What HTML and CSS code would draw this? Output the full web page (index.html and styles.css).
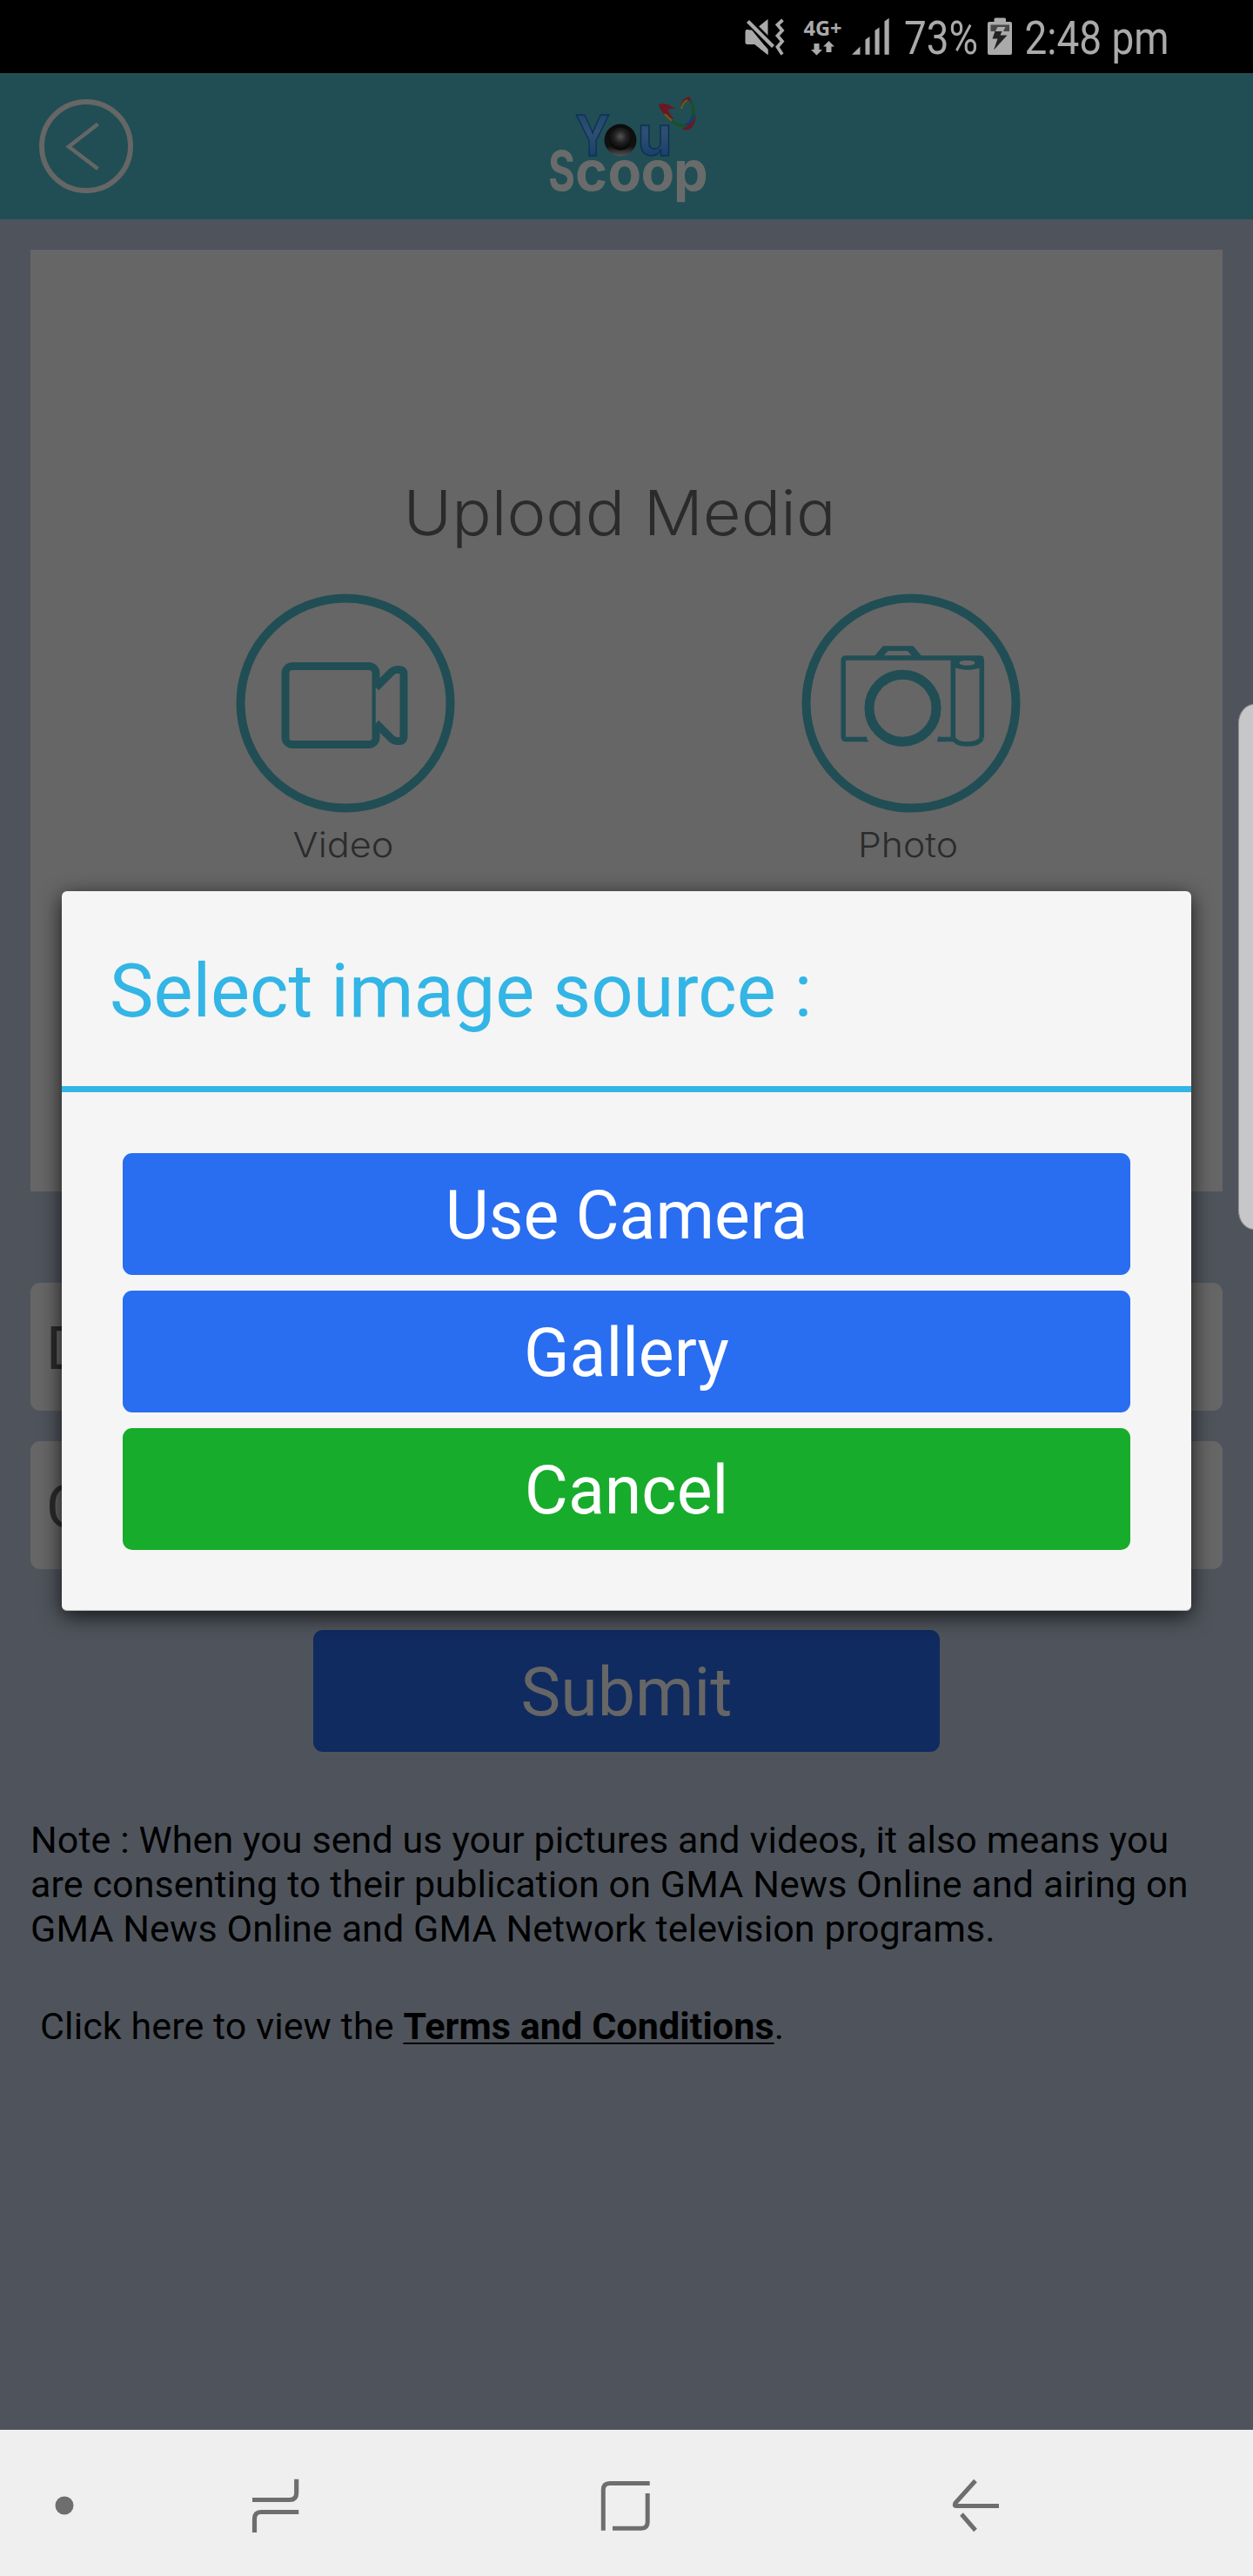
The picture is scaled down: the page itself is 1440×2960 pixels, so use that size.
FILE: index.html
```html
<!DOCTYPE html>
<html lang="en">
<head>
<meta charset="utf-8">
<title>YouScoop</title>
<link rel="stylesheet" href="styles.css">
</head>
<body>
<div class="status">
  <svg class="st-mute" width="52" height="84" viewBox="852 0 52 84">
    <path fill="#aaa" d="M867.5 34 882.5 22V63L867.5 51H859q-2.500 0-2.500-2.500V36.500q0-2.500 2.500-2.500z"/>
    <path stroke="#000" stroke-width="11" d="M855 21 894 60"/>
    <path fill="#aaa" d="M867.500 51 857 44V34.500H864L882.500 57V63z"/>
    <path stroke="#aaa" stroke-width="4.200" d="M859.500 24.500 888.500 53.500"/>
    <path fill="none" stroke="#aaa" stroke-width="3.800" d="M899.500 23 893.500 28.500 899 35 893.500 41 899 47.500 893.500 54 899 62.500"/>
  </svg>
  <svg class="st-net" width="50" height="84" viewBox="920 0 50 84">
    <text class="net" x="923.500" y="40.700" textLength="44" lengthAdjust="spacingAndGlyphs">4G+</text>
    <path fill="#aaa" d="M935.500 50h6v7h3.500l-6.500 6.500-6.500-6.500h3.500zM949.500 60h6v-6.500h3.500l-6.500-6.500-6.500 6.500h3.500z"/>
  </svg>
  <svg class="st-signal" width="50" height="84" viewBox="976 0 50 84">
    <path fill="#aaa" d="M979 62.700 988.500 53.500V62.700zM994.500 62.700V45.500L999.500 42V62.700zM1005.500 62.700V35L1010.600 31.500V62.700zM1016.500 62.700V24.500L1021.700 20.700V62.700z"/>
  </svg>
  <svg class="st-pct" width="94" height="84" viewBox="1034 0 94 84">
    <text class="clock" x="1039" y="62" textLength="85" lengthAdjust="spacingAndGlyphs">73%</text>
  </svg>
  <svg class="st-batt" width="34" height="84" viewBox="1132 0 34 84">
    <path fill="#aaa" d="M1142.500 25v-3q0-1.500 1.500-1.500h10.500q1.500 0 1.500 1.500v3h5q2 0 2 2V61q0 2-2 2h-24q-2 0-2-2V27q0-2 2-2z"/>
    <path fill="#484848" d="M1138.500 28.500h21.500v7.500h-21.500z"/>
    <path fill="#aaa" d="M1146.500 31h9l-3 6h-9z"/>
    <path fill="#222" d="M1143.500 36h8l-2 4.500h8L1142 57.500 1146.500 44.500h-6z"/>
  </svg>
  <svg class="st-time" width="178" height="84" viewBox="1172 0 178 84">
    <text class="clock" x="1177.500" y="62" textLength="166" lengthAdjust="spacingAndGlyphs">2:48 pm</text>
  </svg>
</div>
<header class="header">
  <svg class="back" width="108" height="108" viewBox="0 0 108 108" fill="none" stroke="#666">
    <circle cx="54" cy="54" r="51" stroke-width="6"/>
    <path d="M67.500 28.500 34 54.500 67.500 80" stroke-width="4.500"/>
  </svg>
  <svg class="logo" width="240" height="156" viewBox="0 0 240 156">
    <defs>
      <linearGradient id="blue" x1="0" y1="0" x2="0" y2="1"><stop offset="0" stop-color="#163f6b"/><stop offset=".45" stop-color="#2f4f72"/><stop offset="1" stop-color="#0d3866"/></linearGradient>
      <radialGradient id="lens" cx=".5" cy=".4" r=".55"><stop offset="0" stop-color="#555"/><stop offset=".5" stop-color="#222"/><stop offset="1" stop-color="#080808"/></radialGradient>
      <linearGradient id="ringg" x1="0" y1="0" x2="0" y2="1"><stop offset="0" stop-color="#0c0c0c"/><stop offset=".7" stop-color="#111"/><stop offset="1" stop-color="#555"/></linearGradient>
    </defs>
    <text class="scoop" y="129"><tspan x="30" textLength="31" lengthAdjust="spacingAndGlyphs">S</tspan><tspan x="61 98.500 136.500 174">coop</tspan></text>
    <text class="you" x="61" y="89" textLength="40" lengthAdjust="spacingAndGlyphs">Y</text>
    <text class="you" x="132.500" y="89" textLength="40" lengthAdjust="spacingAndGlyphs">u</text>
    <circle cx="113" cy="71" r="18.500" fill="url(#ringg)"/>
    <circle cx="113" cy="69.500" r="13" fill="url(#lens)"/>
    <path fill="#6b1822" d="M157 30q5-2 10 0l10 5q-6-1-9 1 1 5 6 10l-3 2Q159 40 157 30z"/>
    <path fill="none" stroke="#6b5a14" stroke-width="2.600" d="M164 41q8 9 16 12"/>
    <path fill="none" stroke="#17512a" stroke-width="3.600" d="M172 49q8 6 16 6"/>
    <path fill="#6b1822" d="M184 58Q197 52 200 42 199 55 192 59 187 60 184 58zM182 33q2-11 10-12 3 3 3 10-2-6-5-6-5 2-8 8z"/>
    <path fill="none" stroke="#6b5a14" stroke-width="2.200" d="M183 35q2-8 7-10"/>
    <path fill="#17512a" d="M193 23q6 7 6 18-4 5-5 4 2-10-1-22z"/>
    <path fill="#173a6b" d="M187 53q7-4 8-10l4-2q-1 8-9 14z"/>
  </svg>
</header>
<main class="page">
  <section class="upload">
    <svg class="upload-title" width="520" height="90" viewBox="453 547 520 90">
      <text class="gothic" x="463.500" y="615" font-size="72" textLength="497" lengthAdjust="spacingAndGlyphs">Upload Media</text>
    </svg>
    <div class="options">
      <svg width="260" height="330" viewBox="0 0 260 330">
        <g fill="none" stroke="#204e54">
          <circle cx="130" cy="130" r="120.500" stroke-width="10"/>
          <rect x="61" y="87.500" width="104" height="90" rx="8" stroke-width="9"/>
        </g>
        <path fill="#666" stroke="none" d="M164.700 112 185 95H195V170H185L164.700 153z"/>
        <path fill="none" stroke="#204e54" stroke-width="9" d="M165 112 183 94q3-2.500 6-2.500h3q5 0 5 5V168.500q0 5-5 5h-3q-3 0-6-2.500L165 153"/>
        <text class="gothic" x="69.500" y="307" font-size="39.500" textLength="116" lengthAdjust="spacingAndGlyphs">Video</text>
      </svg>
      <svg width="260" height="330" viewBox="0 0 260 330">
        <g fill="none" stroke="#204e54">
          <circle cx="130" cy="130" r="120.500" stroke-width="10"/>
          <circle cx="120.500" cy="135.700" r="38.500" stroke-width="11"/>
          <path stroke-width="5.500" d="M79 171.500H55q-2.800 0-2.800-3V81q0-2.900 3-2.900H208q3.300 0 3.300 3V170M162 171.500H178M178.300 78V170Q182 177 194.800 177 208 177 211.300 170"/>
        </g>
        <path fill="#204e54" fill-rule="evenodd" d="M88 76 97.600 64.300H132.600L142.300 76zM98.700 75.500H131L126 70H103.500zM178 76H213V88Q194.500 95.500 178 88zM185.400 83.700a9 3 0 0 0 18 0 9 3 0 0 0-18 0zM76 168.700H77.500L81.500 174.300H76zM161 168.700H165V174.300H160z"/>
        <text class="gothic" x="69" y="307" font-size="39.500" textLength="115" lengthAdjust="spacingAndGlyphs">Photo</text>
      </svg>
    </div>
  </section>
  <div class="field">D</div>
  <div class="field second">C</div>
  <div class="submit">Submit</div>
  <p class="note">Note : When you send us your pictures and videos, it also means you<br>are consenting to their publication on GMA News Online and airing on<br>GMA News Online and GMA Network television programs.</p>
  <p class="terms">Click here to view the <b>Terms and Conditions</b>.</p>
</main>
<nav class="nav">
  <svg class="n-dot" width="22" height="22" viewBox="0 0 22 22"><circle cx="11" cy="11" r="10.500" fill="#6e6e6e"/></svg>
  <svg class="n-recent" width="66" height="168" viewBox="284 2792 66 168" fill="none" stroke="#6e6e6e" stroke-width="5.200"><path d="M290 2872.500H333q7.700 0 7.700-8V2848.700M343.300 2886.500H300q-7.500 0-7.500 8V2910"/></svg>
  <svg class="n-home" width="66" height="168" viewBox="686 2792 66 168" fill="none" stroke="#6e6e6e" stroke-width="5"><path d="M693.300 2907.700V2861q0-7.500 7.500-7.500H746.700M744.200 2865V2898q0 7.200-7 7.200H704"/></svg>
  <svg class="n-back" width="66" height="168" viewBox="1090 2792 66 168" fill="none" stroke="#6e6e6e" stroke-width="5"><path d="M1121 2850.500 1098 2876q-2 3.500 1 3.500H1148M1105 2889 1121 2907.500"/></svg>
</nav>
<div class="edge"></div>
<div class="dialog">
  <h1>Select image source :</h1>
  <div class="actions">
    <div class="btn">Use Camera</div>
    <div class="btn">Gallery</div>
    <div class="btn cancel">Cancel</div>
  </div>
</div>
</body>
</html>
```
FILE: styles.css
```css
* { box-sizing: border-box; }
body {
  margin: 0;
  width: 1440px;
  height: 2960px;
  position: relative;
  display: flex;
  flex-direction: column;
  overflow: hidden;
  background: #4f545c;
  font-family: Roboto, sans-serif;
}
svg { display: block; flex: none; }

.status {
  height: 84px;
  background: #000;
  display: flex;
  justify-content: flex-end;
  padding-right: 90px;
}
.st-net { margin-left: 16px; }
.st-signal { margin-left: 6px; }
.st-pct { margin-left: 8px; }
.st-batt { margin-left: 4px; }
.st-time { margin-left: 6px; }
.clock { font: 53px Roboto, sans-serif; fill: #aaa; }
.net { font: 700 23px "Open Sans", sans-serif; fill: #aaa; }

.header {
  height: 168px;
  background: #204e54;
  display: flex;
  align-items: center;
  padding-left: 45px;
}
.logo { margin-left: 447px; }
.scoop { font: 700 63px Inter, sans-serif; fill: #696b6b; }
.you { font: 700 65px Inter, sans-serif; fill: url(#blue); stroke: #0d2f55; stroke-width: 1.5; }

.page {
  flex: 1;
  padding: 35px 35px 0;
  display: flex;
  flex-direction: column;
}
.upload {
  height: 1082px;
  background: #666;
  padding-top: 260px;
}
.upload-title { margin-left: 418px; }
.gothic {
  font-family: Inter, sans-serif;
  font-weight: 300;
  font-feature-settings: "cv11";
  fill: #2b2b2b;
}
.options {
  display: flex;
  gap: 390px;
  margin-top: 41px;
  padding-left: 232px;
}
.field {
  height: 147px;
  margin-top: 105px;
  padding-left: 18px;
  border-radius: 11px;
  background: #666;
  color: #2b2b2b;
  font-size: 69px;
  line-height: 151px;
}
.field.second { margin-top: 35px; }
.submit {
  width: 720px;
  height: 140px;
  margin: 70px auto 0;
  border-radius: 11px;
  background: #102b60;
  color: #666;
  font-size: 77px;
  line-height: 145px;
  text-align: center;
}
.note, .terms {
  margin: 76px 0 0;
  font-size: 43px;
  line-height: 51px;
  letter-spacing: .1px;
  color: #000;
  white-space: nowrap;
}
.terms { margin-top: 61px; padding-left: 11px; }
.terms b { text-decoration: underline; text-decoration-thickness: 2px; text-underline-offset: 4px; }

.nav {
  height: 168px;
  background: #efefef;
  display: flex;
  align-items: center;
}
.n-dot { margin: 6px 0 0 63px; }
.n-recent { margin-left: 199px; }
.n-home { margin-left: 336px; }
.n-back { margin-left: 338px; }

.edge {
  position: absolute;
  left: 1423px;
  top: 809px;
  width: 36px;
  height: 604px;
  border: 1px solid #8f9092;
  border-radius: 18px / 22px;
  background: #c7c7c9;
}

.dialog {
  position: absolute;
  left: 71px;
  top: 1024px;
  width: 1298px;
  height: 827px;
  border-radius: 6px;
  border-bottom: 1px solid #bbb;
  background: #f5f5f5;
  box-shadow: 0 6px 24px rgba(0, 0, 0, .75);
}
.dialog h1 {
  margin: 0;
  height: 231px;
  padding-left: 55px;
  border-bottom: 7px solid #33b5e5;
  color: #33b5e5;
  font-size: 84.9px;
  font-weight: 400;
  line-height: 230px;
}
.actions {
  display: flex;
  flex-direction: column;
  gap: 18px;
  padding: 70px 70px 0;
}
.btn {
  height: 140px;
  border-radius: 11px;
  background: #296df1;
  color: #fff;
  font-size: 77px;
  line-height: 145px;
  text-align: center;
}
.btn.cancel { background: #17ac2b; }
```
